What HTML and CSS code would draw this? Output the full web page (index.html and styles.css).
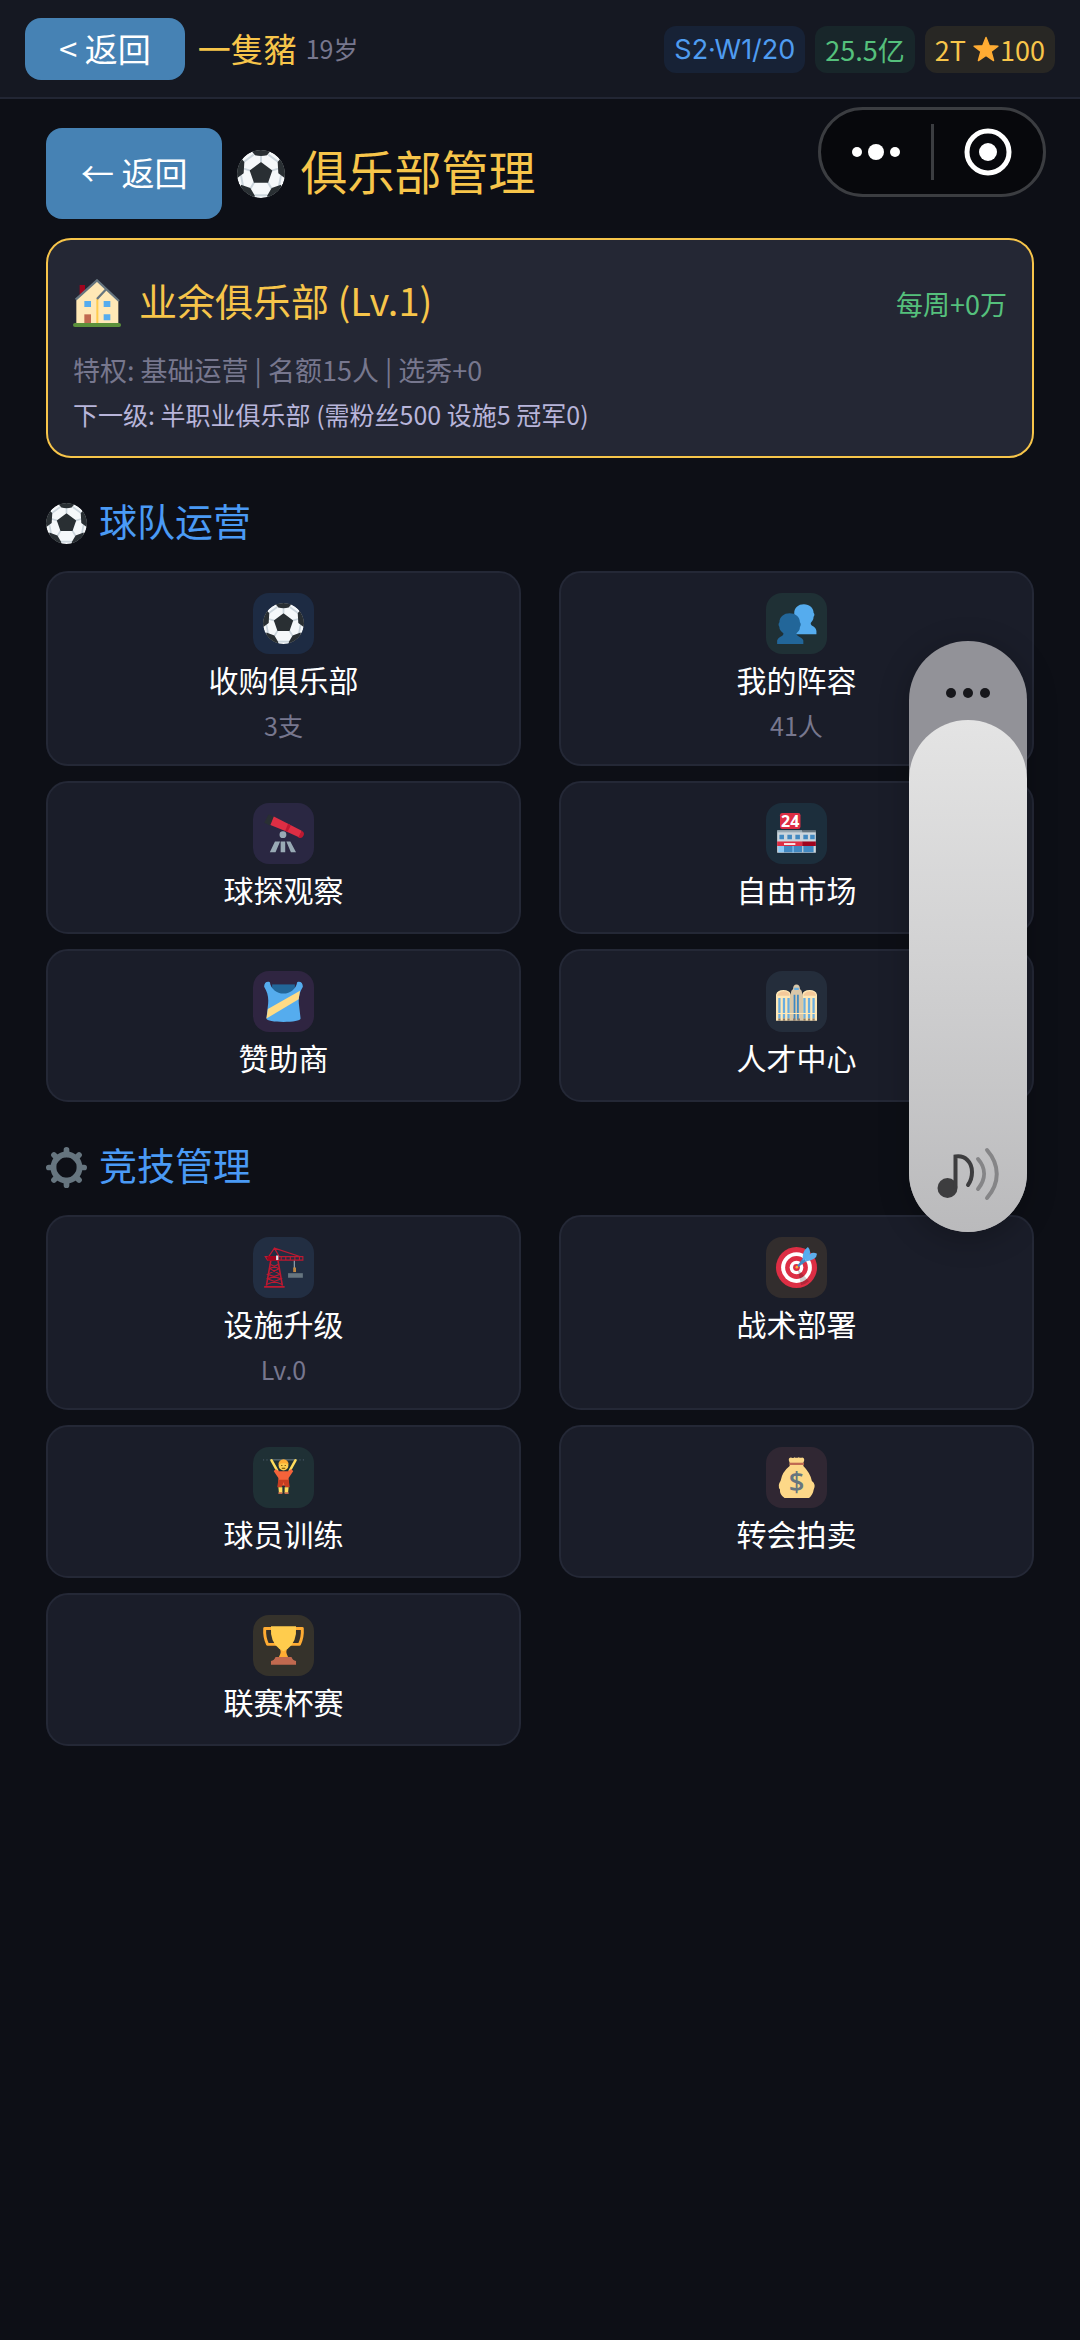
FILE: index.html
```html
<!DOCTYPE html>
<html lang="zh-CN">
<head>
<meta charset="utf-8">
<meta name="viewport" content="width=device-width, initial-scale=1">
<title>俱乐部管理</title>
<link rel="stylesheet" href="styles.css">
</head>
<body>
<svg class="defs" aria-hidden="true">
  <symbol id="ball" viewBox="0 0 36 36">
    <clipPath id="ball-clip"><circle cx="18" cy="18" r="18"/></clipPath>
    <g clip-path="url(#ball-clip)">
      <circle cx="18" cy="18" r="18" fill="#f5f8fa"/>
      <path d="M18 9V4M10 15.500 5 14M26 15.500 31 14M13 24l-3 5M23 24l3 5M12.500 3.500 5 9M23.500 3.500 31 9M3 19l1.500 8M33 19l-1.500 8M13 34h10" fill="none" stroke="#ccd6dd" stroke-width="1.500"/>
      <path d="M18 9 26.500 15.300 23.300 24.500H12.700L9.500 15.300ZM11 1q7-3 14 0l-2.500 3q-4.500 1-9 0ZM-1 22l6-4.500L5.500 9 3 6-2 12ZM37 22l-6-4.500L30.500 9 33 6l5 6ZM3 26l7 2.500 3.500 6L11 38l-9-6ZM33 26l-7 2.500-3.500 6L25 38l9-6Z" fill="#292f33"/>
    </g>
  </symbol>
</svg>

<header class="topbar">
  <button class="btn btn-small" type="button">&lt; 返回</button>
  <span class="player">一隻豬</span>
  <span class="age">19岁</span>
  <div class="chips">
    <span class="chip chip-blue">S2·W1/20</span>
    <span class="chip chip-green">25.5亿</span>
    <span class="chip chip-gold">2T <svg class="star" viewBox="0 0 36 36" aria-hidden="true"><path fill="#ffac33" stroke="#ffac33" stroke-width="2" stroke-linejoin="round" d="M18 2l4.500 11.500L34.500 14l-9.500 7.500L28.500 34 18 27 7.500 34 11 21.500 1.500 14l12-.5Z"/></svg>100</span>
  </div>
</header>

<main class="page">
  <div class="titlebar">
    <button class="btn btn-large" type="button">← 返回</button>
    <svg class="icon-title" aria-hidden="true"><use href="#ball"/></svg>
    <h1>俱乐部管理</h1>
  </div>

  <section class="club">
    <div class="club-head">
      <svg class="icon-title" viewBox="0 0 36 36" aria-hidden="true">
        <path fill="#a0041e" d="M5 4.500h4v9H5z"/>
        <path fill="#ffe8b6" d="M2.500 14.500 18 1 34 16v17.500H2.500z"/>
        <path fill="#ffcc4d" d="M17.500 15H19v18.500h-1.500z"/>
        <path fill="none" stroke="#66757f" stroke-width="1.700" d="M2 15.500 18 1 34.500 16.500M18 15l6.500-7"/>
        <path fill="#5c913b" d="M1.500 33h33a1.500 1.500 0 0 1 0 3h-33a1.500 1.500 0 0 1 0-3z"/>
        <path fill="#c1694f" d="M8.500 26.500H13.500V33h-5z"/>
        <path fill="#55acee" d="M8.500 16.500h5V21h-5zM23 16.500h5V21h-5zM23 26.500h5V31h-5z"/>
      </svg>
      <h2>业余俱乐部 (Lv.1)</h2>
      <span class="income">每周+0万</span>
    </div>
    <p class="perks">特权: 基础运营 | 名额15人 | 选秀+0</p>
    <p class="next">下一级: 半职业俱乐部 (需粉丝500 设施5 冠军0)</p>
  </section>

  <section>
    <h2 class="heading"><svg class="icon" aria-hidden="true"><use href="#ball"/></svg><span>球队运营</span></h2>
    <div class="grid">
      <button class="card" type="button">
        <span class="tile tile-blue"><svg class="icon" aria-hidden="true"><use href="#ball"/></svg></span>
        <span class="label">收购俱乐部</span>
        <span class="sub">3支</span>
      </button>
      <button class="card" type="button">
        <span class="tile tile-green"><svg class="icon" viewBox="0 0 36 36" aria-hidden="true">
          <path fill="#55acee" d="M16 9c0-5 3.500-8 8.500-8S33 4.500 33 8.500c1 1 1 2.500 0 3.500 0 3-1.500 4-2.500 5.500-.5 3 4.500 2.500 5 7v3H17z"/>
          <path fill="#226699" d="M3 17c0-5 4-8 9-8s9 3 9 8c1 1 1 3 0 4 0 3-1.500 4-3 5.500-.5 3 5 3 6 6.500v3H1v-3c1-4 6-3.500 5.500-6.500C5 25 3 24 3 21c-1-1-1-3 0-4z"/>
        </svg></span>
        <span class="label">我的阵容</span>
        <span class="sub">41人</span>
      </button>
      <button class="card" type="button">
        <span class="tile tile-indigo"><svg class="icon" viewBox="0 0 36 36" aria-hidden="true">
          <path fill="#292f33" d="M5 1 10 4 6 11 1 8.500z"/>
          <path fill="#dd2e44" d="M9.500 3 22 9.500 34 15.500 32 21.500 19 15.500 6.500 10.500z"/>
          <path fill="#be1931" d="M22 9.500 19.500 15.500l2 1L24.500 11zM34 15.500a3.200 3.200 0 1 1-3 6z"/>
          <path fill="#99aab5" d="M10.500 25h4.500L11 34.500H6zM15.500 25h4v9.500h-4zM20.500 25H24l5 9.500h-4.500z"/>
          <circle cx="17.500" cy="19" r="3" fill="#99aab5"/>
        </svg></span>
        <span class="label">球探观察</span>
      </button>
      <button class="card" type="button">
        <span class="tile tile-cyan"><svg class="icon" viewBox="0 0 36 36" aria-hidden="true">
          <path fill="#ccd6dd" d="M1 16h34v19H1z"/>
          <path fill="#99aab5" d="M1 15h22v2H1z"/>
          <path fill="#66757f" d="M23 15h12v2H23z"/>
          <path fill="#4289c1" d="M3 19h4v4H3zM10 19h4v4h-4zM17 19h4v4h-4zM24 19h4v4h-4zM30 19h4v4h-4zM7 29h16v5.500H7zM24 29h9v5.500h-9z"/>
          <path fill="#8ccaf7" d="M2 29h5v5.500H2zM14.500 29h1v6h-1z"/>
          <path fill="#dd2e44" d="M1 25h22v4H1z"/>
          <path fill="#a0041e" d="M23 25h12v4H23z"/>
          <path fill="#fff" d="M7 26.500h10v1.500H7z"/>
          <rect x="3.500" y="0" width="18" height="14" rx="2" fill="#dd2e44"/>
          <text class="sign" x="12.500" y="12" text-anchor="middle">24</text>
        </svg></span>
        <span class="label">自由市场</span>
      </button>
      <button class="card" type="button">
        <span class="tile tile-purple"><svg class="icon" viewBox="0 0 36 36" aria-hidden="true">
          <path fill="#226699" d="M8 3h20v9H8z"/>
          <path fill="#55acee" d="M6 1C7 7 12 11 18 11S29 7 30 1c3-1 5 1 5 4-3 5-4 9-3.500 15L33 33c0 2-7 3-15 3S3 35 3 33l1.500-13C5 14 4 10 1 5 1 2 3 0 6 1z"/>
          <path fill="#ffdb85" d="M32.500 8.500 4.300 24.500 3 33 31.300 16z"/>
        </svg></span>
        <span class="label">赞助商</span>
      </button>
      <button class="card" type="button">
        <span class="tile tile-slate"><svg class="icon" viewBox="0 0 36 36" aria-hidden="true">
          <path fill="#d9c7a9" d="M13 11q0-3 2-4 0-4 3-4t3 4q2 1 2 4v24H13z"/>
          <path fill="#ffe8b6" d="M0 12q1-4 6.500-4T13 12v23H0zM23 12q1-4 6.500-4T36 12v23H23z"/>
          <path fill="#f4c99a" d="M1 13q1-4 6-4t5 4zM24 13q1-4 6-4t5 4z"/>
          <path fill="#6aaee0" d="M2 15h2v18H2zM6 15h2v18H6zM10 15h2v18h-2zM24 15h2v18h-2zM28 15h2v18h-2zM32 15h2v18h-2zM16 6h4v2h-4z"/>
          <path fill="#3b88c3" d="M15.500 12h1.500v22h-1.500zM18.500 12H20v22h-1.500z"/>
          <path fill="#ffe8b6" d="M0 28h36v1H0z"/>
          <path fill="#8a7a68" d="M2 33h2v2H2zM6 33h2v2H6zM10 33h2v2h-2zM15 33h2v2h-2zM19 33h2v2h-2zM24 33h2v2h-2zM28 33h2v2h-2zM32 33h2v2h-2z"/>
        </svg></span>
        <span class="label">人才中心</span>
      </button>
    </div>
  </section>

  <section>
    <h2 class="heading"><svg class="icon" viewBox="0 0 36 36" aria-hidden="true">
      <circle cx="18" cy="18" r="11.500" fill="none" stroke="#66757f" stroke-width="5"/>
      <path d="M18 2.500v4M18 29.500v4M2.500 18h4M29.500 18h4M7 7l3 3M26 26l3 3M29 7l-3 3M10 26l-3 3" stroke="#66757f" stroke-width="5" stroke-linecap="round"/>
    </svg><span>竞技管理</span></h2>
    <div class="grid">
      <button class="card" type="button">
        <span class="tile tile-steel"><svg class="icon" viewBox="0 0 36 36" aria-hidden="true">
          <g fill="none" stroke="#be1931">
            <path stroke-width="1.400" d="M7 11 3 34M13 11l4 23M1 35h18"/>
            <path d="M6 15l8 4-10 5 12 4-13 5M14 15l-8 4 9 5-11 4 13 5M5 8.500 10 1 14 8M10 1l23 7.500M2 8.500h33v3H4zM16 8.500v3M20 8.500v3M24 8.500v3M28 8.500v3M32 8.500v3"/>
          </g>
          <path fill="#a0041e" d="M4 8h10v4H4z"/>
          <path fill="#e1e8ed" d="M11.500 7.500h2v4h-2z"/>
          <path stroke="#99aab5" d="M27.500 12v7"/>
          <path fill="#c1873f" d="M26.500 18h2.500v4h-2.500z"/>
          <path fill="#66757f" d="M22 23h13v4H22z"/>
        </svg></span>
        <span class="label">设施升级</span>
        <span class="sub">Lv.0</span>
      </button>
      <button class="card" type="button">
        <span class="tile tile-brown"><svg class="icon" viewBox="0 0 36 36" aria-hidden="true">
          <circle cx="18" cy="18" r="18" fill="#dd2e44"/>
          <circle cx="18" cy="18" r="13.500" fill="#fff"/>
          <circle cx="18" cy="18" r="10" fill="#dd2e44"/>
          <circle cx="18" cy="18" r="6" fill="#fff"/>
          <circle cx="18" cy="18" r="3" fill="#dd2e44"/>
          <path fill="#111" opacity=".2" d="M19 19 29 30a16 16 0 0 1-7 3.500z"/>
          <path fill="#4289c1" d="M17.500 18 24 9.500 27 12 18.500 18.500z"/>
          <path fill="#55acee" d="M23.500 12Q22.500 4 28 0 32 4 28 9.500z"/>
          <path fill="#5dadec" d="M26 10Q31 3 36 6q0 5.500-11 7z"/>
          <circle cx="18.300" cy="17.700" r="1.200" fill="#ffac33"/>
        </svg></span>
        <span class="label">战术部署</span>
      </button>
      <button class="card" type="button">
        <span class="tile tile-green"><svg class="icon" viewBox="0 0 36 36" aria-hidden="true">
          <path stroke="#66757f" d="M6 2.500h24"/>
          <path stroke="#3b4a55" stroke-width="1.500" d="M0 2.500h1M3 2.500h1M32 2.500h1M35 2.500h1"/>
          <path fill="none" stroke="#ffdc5d" stroke-width="2.200" stroke-linecap="round" d="M7.500 3 12.500 12M28.500 3 23.500 12"/>
          <path fill="#f4633a" d="M11 10.500 14 12.500h8l3-2 1.500 2-4 6V25h-9v-6.500l-4-6z"/>
          <path fill="#c63d21" d="M13.500 20h9l1 6.500h-4L18 22l-1.500 4.500h-4z"/>
          <path fill="#ffdc5d" d="M13.500 26.500H17v5h-3zM19 26.500h3.500l-.5 5h-3z"/>
          <path fill="#c1694f" d="M13.500 31H17v1.500h-3.500zM19 31h3.500v1.500H19z"/>
          <circle cx="18" cy="7.500" r="4.300" fill="#ffcc4d"/>
          <path fill="#ffac33" d="M13.500 6.500a4.500 4.500 0 0 1 9 0Q18 4.500 13.500 6.500z"/>
          <path fill="#664500" d="M16 7h1v1h-1zM19 7h1v1h-1zM16.500 9.500h3v.8h-3z"/>
        </svg></span>
        <span class="label">球员训练</span>
      </button>
      <button class="card" type="button">
        <span class="tile tile-wine"><svg class="icon" viewBox="0 0 36 36" aria-hidden="true">
          <path fill="#fdd888" d="M12 5Q10 1 13 .5q2 1 3-.3 2 1 4 0 1.500 1 3 .2 3 .6 1 4.600v3q6 6 7.500 13 4 3 1.500 8-.5 4-4 7H7.500Q3 33 3.500 28.500 1 25 4 21 5.500 13 12 8z"/>
          <path fill="#bf6952" d="M12 5h12.500v2H12z"/>
          <text class="dollar" x="18" y="31" text-anchor="middle">$</text>
        </svg></span>
        <span class="label">转会拍卖</span>
      </button>
      <button class="card" type="button">
        <span class="tile tile-gold"><svg class="icon" viewBox="0 0 36 36" aria-hidden="true">
          <path fill="none" stroke="#ffac33" stroke-width="2.600" stroke-linejoin="round" d="M9 3H1.500Q1 11 4 17h8M27 3h7.500Q35 11 32 17h-8"/>
          <path fill="#ffac33" d="M14 20h8q-3 3 0 8h-8q3-5 0-8z"/>
          <path fill="#ffcc4d" d="M7 1h22q1 14-7.500 20L18 23l-3.500-2Q6 15 7 1z"/>
          <path fill="#c1694f" d="M11 28h14q1 3 4 3.500V35H7v-3.500Q10 31 11 28z"/>
        </svg></span>
        <span class="label">联赛杯赛</span>
      </button>
    </div>
  </section>
</main>

<div class="capsule">
  <button class="capsule-btn" type="button" aria-label="更多"><svg width="48" height="20" viewBox="0 0 48 20" fill="#fff"><circle cx="5" cy="10" r="5"/><circle cx="24" cy="10" r="8"/><circle cx="43" cy="10" r="5"/></svg></button>
  <span class="divider"></span>
  <button class="capsule-btn" type="button" aria-label="关闭"><svg width="48" height="48" viewBox="0 0 48 48"><circle cx="24" cy="24" r="21" fill="none" stroke="#fff" stroke-width="5"/><circle cx="24" cy="24" r="9" fill="#fff"/></svg></button>
</div>

<div class="volume">
  <svg class="volume-more" width="44" height="10" viewBox="0 0 44 10" fill="#17171b"><circle cx="5" cy="5" r="5"/><circle cx="22" cy="5" r="5"/><circle cx="39" cy="5" r="5"/></svg>
  <div class="volume-level">
    <svg width="62" height="54" viewBox="0 0 62 54" fill="none" stroke-width="4" stroke-linecap="round">
      <circle cx="10.500" cy="41" r="10" fill="#3d3d3f"/>
      <path stroke="#3d3d3f" d="M18.500 40V9.500C28 8 35 15 35 25c0 5-1 9-4 13"/>
      <path stroke="#858587" d="M41 12c8 9 8 20 0 30"/>
      <path stroke="#858587" d="M50 3c13 15 13 33 0 48"/>
    </svg>
  </div>
</div>
</body>
</html>
```
FILE: styles.css
```css
* {
  box-sizing: border-box;
}

body {
  margin: 0;
  min-height: 100vh;
  position: relative;
  background: #0d0f16;
  color: #fff;
  font-family: "Noto Sans CJK SC", "Noto Sans", sans-serif;
  font-size: 30px;
}

button {
  margin: 0;
  padding: 0;
  border: 0;
  background: none;
  color: inherit;
  font: inherit;
}

h1,
h2,
p {
  margin: 0;
  font-weight: 400;
}

svg {
  display: block;
  flex: none;
}

.defs {
  position: absolute;
  width: 0;
  height: 0;
}

.topbar {
  display: flex;
  align-items: center;
  padding: 18px 25px 17px;
  background: #151822;
  border-bottom: 2px solid #222634;
}

.btn {
  flex: none;
  background: #4682b4;
  border-radius: 16px;
  color: #fff;
  font-size: 33px;
  white-space: nowrap;
}

.btn-small {
  padding: 0 34px 2px;
  line-height: 60px;
}

.btn-large {
  padding: 0 35px 2px;
  line-height: 89px;
}

.player {
  margin-left: 13px;
  padding-bottom: 2px;
  color: #f7c54a;
  font-size: 33px;
  line-height: 48px;
}

.age {
  margin-left: 9px;
  padding-bottom: 2px;
  color: #77778e;
  font-size: 25px;
}

.chips {
  display: flex;
  gap: 10px;
  margin-left: auto;
}

.chip {
  display: flex;
  align-items: center;
  padding: 0 10px;
  border-radius: 12px;
  font-size: 27px;
  line-height: 47px;
  white-space: pre;
}

.chip-blue {
  background: #172236;
  color: #4f9cf0;
  font-family: Inter, "Noto Sans", sans-serif;
}

.chip-green {
  background: #18262a;
  color: #55c07c;
}

.chip-gold {
  background: #282724;
  color: #f7c54a;
}

.star {
  width: 28px;
  height: 26px;
}

.page {
  padding: 29px 46px 60px;
}

.titlebar {
  display: flex;
  align-items: center;
  gap: 15px;
  margin-bottom: 19px;
}

.titlebar h1 {
  padding-bottom: 8px;
  color: #f7c54a;
  font-size: 47px;
  line-height: 56px;
}

.icon-title {
  width: 48px;
  height: 48px;
}

.club {
  padding: 35px 25px 20px;
  background: #242734;
  border: 2px solid #f7c54a;
  border-radius: 25px;
}

.club-head {
  display: flex;
  align-items: center;
  gap: 18px;
  margin-bottom: 17px;
}

.club-head h2 {
  padding-bottom: 6px;
  color: #f7c54a;
  font-size: 38px;
  line-height: 50px;
}

.income {
  margin-left: auto;
  color: #55c07c;
  font-size: 27px;
}

.perks {
  color: #77778e;
  font-size: 27px;
  line-height: 44px;
}

.next {
  color: #b8b5da;
  font-size: 25px;
  line-height: 44px;
}

.heading {
  display: flex;
  align-items: center;
  gap: 12px;
  margin: 37px 0 20px;
  color: #4a9af5;
  font-size: 38px;
  line-height: 50px;
}

.heading span {
  padding-bottom: 6px;
}

.icon {
  width: 41px;
  height: 41px;
  overflow: visible;
}

.grid {
  display: grid;
  grid-template-columns: 1fr 1fr;
  gap: 15px 38px;
}

.card {
  display: flex;
  flex-direction: column;
  align-items: center;
  padding: 20px 20px 23px;
  background: #1a1d29;
  border: 2px solid #242836;
  border-radius: 22px;
}

.tile {
  display: grid;
  place-items: center;
  width: 61px;
  height: 61px;
  border-radius: 16px;
}

.tile-blue { background: #1d2b43; }
.tile-green { background: #1f3035; }
.tile-indigo { background: #2a2742; }
.tile-cyan { background: #1c2e3c; }
.tile-purple { background: #2f2541; }
.tile-slate { background: #242d3b; }
.tile-steel { background: #222e42; }
.tile-brown { background: #322d2d; }
.tile-wine { background: #302733; }
.tile-gold { background: #35322b; }

.label {
  margin-top: 5px;
  font-size: 30px;
  line-height: 40px;
}

.sub {
  margin-top: 10px;
  color: #77778e;
  font-size: 25px;
  line-height: 32px;
}

.sign {
  fill: #fff;
  font: 700 14px "Open Sans", sans-serif;
}

.dollar {
  fill: #67757f;
  font: 600 24px "Open Sans", sans-serif;
}

.capsule {
  position: absolute;
  top: 107px;
  right: 34px;
  display: flex;
  align-items: center;
  width: 228px;
  height: 90px;
  background: #07080c;
  border: 3px solid #3b3d41;
  border-radius: 45px;
}

.capsule-btn {
  flex: 1;
  display: grid;
  place-items: center;
}

.divider {
  width: 3px;
  height: 56px;
  background: #3b3d41;
}

.volume {
  position: absolute;
  top: 641px;
  right: 53px;
  display: flex;
  flex-direction: column;
  align-items: center;
  width: 118px;
  height: 591px;
  background: #929298;
  border-radius: 59px;
  box-shadow: 0 6px 30px rgba(0, 0, 0, 0.25);
}

.volume-more {
  margin: 47px 0 22px;
}

.volume-level {
  flex: 1;
  display: flex;
  align-items: flex-end;
  justify-content: center;
  width: 100%;
  padding-bottom: 31px;
  background: linear-gradient(#e4e4e4, #d0d0d1 50%, #bababc);
  border-radius: 59px;
}
```
